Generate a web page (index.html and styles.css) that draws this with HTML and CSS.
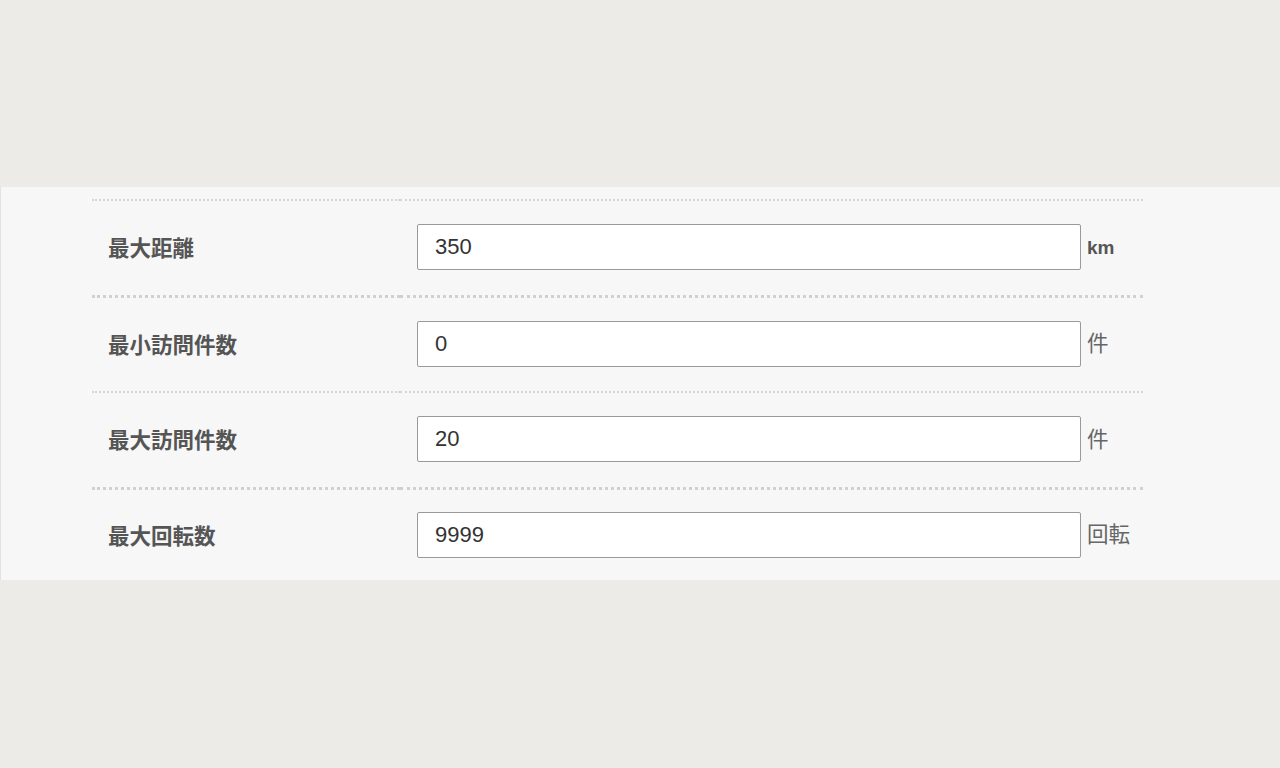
FILE: index.html
```html
<!DOCTYPE html>
<html lang="ja">
<head>
    <meta charset="UTF-8">
    <meta name="viewport" content="width=device-width, initial-scale=1.0">
    <title>設定</title>
    <link rel="stylesheet" href="styles.css">
</head>
<body>
    <div class="panel">
        <div class="form">
            <div class="row">
                <div class="label">最大距離</div>
                <div class="field">
                    <input type="text" value="350">
                    <span class="unit unit-bold">km</span>
                </div>
            </div>
            <div class="row">
                <div class="label">最小訪問件数</div>
                <div class="field">
                    <input type="text" value="0">
                    <span class="unit">件</span>
                </div>
            </div>
            <div class="row">
                <div class="label">最大訪問件数</div>
                <div class="field">
                    <input type="text" value="20">
                    <span class="unit">件</span>
                </div>
            </div>
            <div class="row">
                <div class="label">最大回転数</div>
                <div class="field">
                    <input type="text" value="9999">
                    <span class="unit">回転</span>
                </div>
            </div>
        </div>
    </div>
</body>
</html>
```

FILE: styles.css
```css
body {
    margin: 0;
    background-color: #edebe7;
    font-family: "Liberation Sans", "Noto Sans CJK JP", sans-serif;
    color: #555;
}
.panel {
    margin-top: 187px;
    background: #f7f7f7;
    border-left: 1px solid #e2e2e2;
    padding: 12px 0 0 91px;
}
.form {
    width: 1051px;
}
.row {
    display: flex;
}
.label, .field {
    box-sizing: border-box;
    height: 96px;
    padding-bottom: 2px;
    display: flex;
    align-items: center;
    border-top: 2px dotted #d6d6d6;
}
.row:nth-child(even) .label,
.row:nth-child(even) .field {
    border-top: 3px dotted #d0d0d0;
}
.row:last-child .label,
.row:last-child .field {
    height: 93px;
    padding-bottom: 1px;
}
.label {
    width: 308px;
    padding-left: 16px;
    font-family: "Noto Sans CJK JP", sans-serif;
    font-weight: bold;
    font-size: 21.5px;
    line-height: 1;
    color: #555;
}
.label span {
    display: block;
}
.field {
    flex: 1;
    padding-left: 17px;
}
input {
    box-sizing: border-box;
    width: 664px;
    height: 46px;
    padding: 0 17px;
    border: 1px solid #9a9a9a;
    border-radius: 2px;
    background: white;
    font-family: "Liberation Sans", sans-serif;
    font-size: 22px;
    color: #333;
}
.unit {
    margin-left: 6px;
    margin-bottom: 3px;
    font-family: "Noto Sans CJK JP", sans-serif;
    font-size: 21.5px;
    line-height: 1;
    color: #666;
}
.unit-bold {
    margin-bottom: 0;
    font-family: "Liberation Sans", sans-serif;
    font-weight: bold;
    font-size: 19px;
    color: #555;
}
```
